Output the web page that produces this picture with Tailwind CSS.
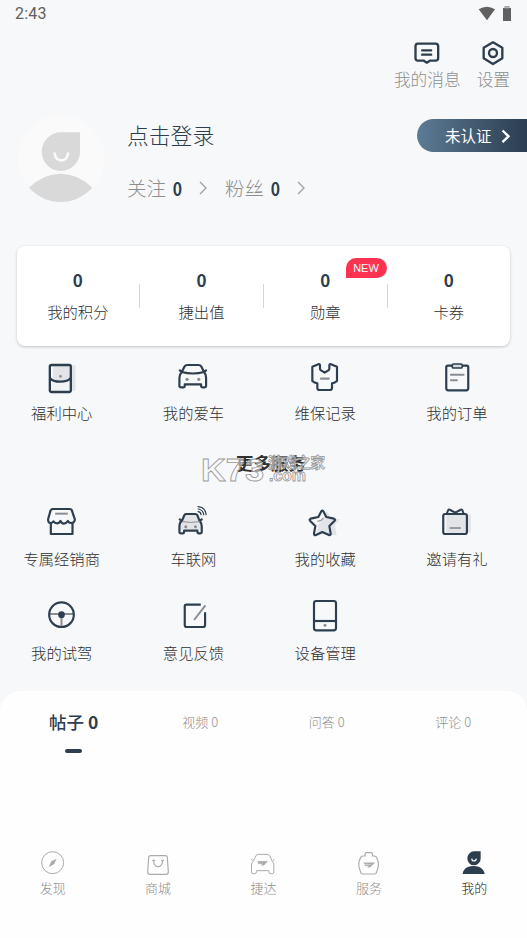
<!DOCTYPE html>
<html lang="zh-CN">
<head>
<meta charset="utf-8">
<meta name="viewport" content="width=device-width, initial-scale=1">
<title>我的</title>
<script src="https://cdn.jsdelivr.net/npm/@tailwindcss/browser@4"></script>
</head>
<body class="bg-[#f7f8fa] overflow-hidden">
<div class="relative flex h-[938px] w-[527px] flex-col overflow-hidden bg-[#f7f8fa] font-['Noto_Sans_CJK_SC',sans-serif] font-light text-[#303030]">

  <!-- status bar -->
  <header class="flex h-7 shrink-0 items-center justify-between pl-[15px] pr-[15px]">
    <span class="font-['Roboto',sans-serif] text-[16px] font-normal leading-7 tracking-[0.2px] text-[#606060]">2:43</span>
    <svg class="h-4 w-9 -translate-y-px" viewBox="288 12 108 48" fill="#606060"><path d="M296 25Q321 10 345 25L321 58Z"/><path d="M374 16h14v5h5v39h-24V21h5z"/><path fill="#b5b5b5" d="M374 16h14v6h-14z"/></svg>
  </header>

  <!-- shortcuts -->
  <div class="flex h-[83px] shrink-0 justify-end gap-4 pr-[17px] pt-[9px] text-[16.7px] leading-[20px] text-[#8e8e8e]">
    <div class="flex flex-col items-center">
      <svg class="size-8" viewBox="94.5 111 96 96" fill="none" stroke="#2d3e4f" stroke-width="7" stroke-linejoin="round" stroke-linecap="round"><path d="M115 131h53q8 0 8 8v35q0 8-8 8h-17l-9 6-9-6h-18q-7 0-7-8v-35q0-8 7-8zM128 151h27M128 164h27"/></svg>
      <span>我的消息</span>
    </div>
    <div class="flex flex-col items-center">
      <svg class="size-8" viewBox="291 111 96 96" fill="none" stroke="#2d3e4f" stroke-width="7" stroke-linejoin="round"><path d="M339 127l28 16v32l-28 17-28-17v-32z"/><circle cx="339" cy="159" r="12"/></svg>
      <span>设置</span>
    </div>
  </div>

  <!-- profile -->
  <section class="flex h-[135px] shrink-0 items-start">
    <svg class="ml-[17px] mt-px h-[92px] w-[90px] shrink-0" viewBox="51 36 270 276"><circle cx="185" cy="175" r="130" fill="#fafafa"/><path d="M183 97h57v58a57.500 58 0 1 1-57-58z" fill="#d9d9d9"/><path d="M87 263Q130 221 182 221T277 263Q235 306 182 306T87 263z" fill="#d9d9d9"/><path d="M164 161q3 20 20 20t20-20" fill="none" stroke="#fafafa" stroke-width="8" stroke-linecap="round"/></svg>
    <div class="ml-5 flex flex-1 flex-col pt-2">
      <h1 class="text-[21.800px] font-light leading-8 text-[#2d3e4f]">点击登录</h1>
      <div class="mt-[21px] flex items-center text-[19.500px] leading-8 text-[#8e8e8e]">
        <span>关注</span><b class="ml-[6px] inline-block scale-x-85 text-[18.500px] font-bold text-[#2d3e4f]">0</b>
        <svg class="ml-[15px] h-4 w-[10px]" viewBox="0 0 10 16" fill="none" stroke="#a3a3a3" stroke-width="1.400"><path d="M2 2l6 6-6 6"/></svg>
        <span class="ml-[17px]">粉丝</span><b class="ml-[6px] inline-block scale-x-85 text-[18.500px] font-bold text-[#2d3e4f]">0</b>
        <svg class="ml-[15px] h-4 w-[10px]" viewBox="0 0 10 16" fill="none" stroke="#a3a3a3" stroke-width="1.400"><path d="M2 2l6 6-6 6"/></svg>
      </div>
    </div>
    <div class="mt-2 flex h-[33px] w-[110px] items-center rounded-l-full bg-linear-to-r from-[#5c7b95] to-[#2c3e50] pl-7 text-[15.500px] font-normal text-white">
      <span>未认证</span>
      <svg class="ml-[8px] h-4 w-3" viewBox="0 0 12 16" fill="none" stroke="#fff" stroke-width="2.400"><path d="M2.500 2.500l6 5.800-6 5.800"/></svg>
    </div>
  </section>

  <!-- balances -->
  <section class="mx-[17px] flex h-[100px] shrink-0 rounded-[8px] bg-white text-center text-[15.300px] shadow-[0_1px_3px_rgba(0,0,0,0.22)]">
    <div class="-ml-[0.500px] flex w-[123.700px] items-center"><div class="flex-1"><b class="block text-[17px] font-bold leading-[30px] text-[#2d3e4f]">0</b><span class="block leading-8">我的积分</span></div><i class="h-6 w-px bg-[#d5d5d5]"></i></div>
    <div class="flex w-[123.700px] items-center"><div class="flex-1"><b class="block text-[17px] font-bold leading-[30px] text-[#2d3e4f]">0</b><span class="block leading-8">捷出值</span></div><i class="h-6 w-px bg-[#d5d5d5]"></i></div>
    <div class="relative flex w-[123.700px] items-center"><div class="flex-1"><b class="block text-[17px] font-bold leading-[30px] text-[#2d3e4f]">0</b><span class="block leading-8">勋章</span></div><i class="h-6 w-px bg-[#d5d5d5]"></i>
      <span class="absolute right-[1px] top-3 h-5 w-[41px] rounded-[10px] rounded-bl-none bg-[#fb3350] font-['Liberation_Sans',sans-serif] text-[11px] font-normal leading-5 text-white">NEW</span>
    </div>
    <div class="flex w-[122.500px] items-center"><div class="flex-1"><b class="block text-[17px] font-bold leading-[30px] text-[#2d3e4f]">0</b><span class="block leading-8">卡券</span></div></div>
  </section>

  <!-- main services -->
  <section class="-ml-[4.200px] grid h-[107px] w-[527px] shrink-0 grid-cols-4 pt-[15px] text-[15.300px] leading-6">
    <div class="flex flex-col items-center gap-[7px]">
      <svg class="size-8 overflow-visible" viewBox="136.500 33 96 96" fill="none" stroke="#2d3e4f" stroke-width="7" stroke-linejoin="round"><path d="M158 46h67v76h-67z" fill="#e2e4e8" stroke="none"/><path d="M148 90q32 16 62 0v34h-62z" fill="#f2f3f5" stroke="none"/><rect x="148" y="45" width="63" height="81" rx="5"/><path d="M148 84q8 11 31 11t32-11"/><circle cx="180" cy="79" r="4" fill="#8b8d92" stroke="none"/></svg>
      <span>福利中心</span>
    </div>
    <div class="flex flex-col items-center gap-[7px]">
      <svg class="size-8 overflow-visible" viewBox="531.750 33 96 96" fill="none" stroke="#2d3e4f" stroke-width="6.500" stroke-linejoin="round" stroke-linecap="round"><path d="M546 66l8-16q3-5 9-5h33q6 0 9 5l8 16M546 66q33 9 67 0M546 66q-7 8-7 17v26q1 3 5 3h8q3 0 3-3v-6h49v6q0 3 4 3h7q4 0 4-4V83q0-10-6-17M540 61l5 4M619 61l-5 4"/><g fill="#8b8d92" stroke="none"><circle cx="562" cy="88" r="5"/><circle cx="597" cy="88" r="5"/></g></svg>
      <span>我的爱车</span>
    </div>
    <div class="flex flex-col items-center gap-[7px]">
      <svg class="size-8 overflow-visible" viewBox="138 33 96 96" fill="none" stroke="#2d3e4f" stroke-width="6.500" stroke-linejoin="round" stroke-linecap="round"><path d="M148 50l20-8q3 0 3 5v9q0 3 3 5l11 7 11-7q3-2 3-5v-9q0-5 3-5l20 8v43q-6 6-15 7v14q0 6-7 6h-30q-7 0-7-6v-14q-9-1-15-7z"/><path d="M174 86h23" stroke="#8b8d92"/></svg>
      <span>维保记录</span>
    </div>
    <div class="flex flex-col items-center gap-[7px]">
      <svg class="size-8 overflow-visible" viewBox="533.250 33 96 96" fill="none" stroke="#2d3e4f" stroke-width="6.500" stroke-linejoin="round" stroke-linecap="round"><path d="M566 47h-12q-5 0-5 5v63q0 6 6 6h54q6 0 6-6V52q0-5-5-5h-12"/><rect x="567" y="42" width="30" height="12" rx="4" fill="#d9dde2" stroke-width="5"/><path d="M563 74h38M563 91h18" stroke="#8b8d92" stroke-width="6"/></svg>
      <span>我的订单</span>
    </div>
  </section>

  <!-- section heading with site stamp over it -->
  <div class="relative flex h-[53px] shrink-0 items-start pl-[236px]">
    <h2 class="-mt-px text-[17.500px] font-bold leading-[22px] text-[#303030]">更多服务</h2>
    <div class="absolute left-[201px] top-[2px] flex" aria-hidden="true">
      <svg class="h-[30px] w-[128px] overflow-visible" viewBox="0 0 128 30" fill="#f7f8fa" fill-opacity=".55" stroke="#999" stroke-width=".8"><text x="0" y="25.500" textLength="63" lengthAdjust="spacingAndGlyphs" font-family="Liberation Sans" font-weight="700" font-size="31">K73</text><text x="67" y="13" font-family="Noto Sans CJK SC" font-weight="700" font-size="14.500" textLength="57">游戏之家</text><text x="68" y="26" font-family="Liberation Sans" font-weight="700" font-size="16" textLength="37">.com</text></svg>
    </div>
  </div>

  <!-- more services -->
  <section class="-ml-[4.200px] grid h-[185px] w-[527px] shrink-0 auto-rows-[93px] grid-cols-4 text-[15.300px] leading-6">
    <div class="flex flex-col items-center gap-[8px]">
      <svg class="size-8 overflow-visible" viewBox="136.500 33 96 96" fill="none" stroke="#2d3e4f" stroke-width="6.500" stroke-linejoin="round"><path d="M151 82v35h65V82M155 42h53q4 0 6 4l9 27q0 11-11 11-7 0-10-6-5 8-12 8-6 0-10-8-5 7-10 7-7 0-11-6-4 5-9 5-8 0-7-12l7-25q2-5 9-5z"/><path d="M164 56h38" stroke="#8b8d92" stroke-width="6"/></svg>
      <span>专属经销商</span>
    </div>
    <div class="flex flex-col items-center gap-[8px]">
      <svg class="size-8 overflow-visible" viewBox="531.750 33 96 96" fill="none" stroke="#2d3e4f" stroke-width="6.500" stroke-linejoin="round" stroke-linecap="round"><path d="M547 76l7-16q2-3 6-3h26q5 0 7 4l6 15 6 8v20h-65V84z" fill="#e2e4e8" stroke="none"/><path d="M546 79l8-19q2-3 6-3h26q5 0 7 4l7 18M544 78q-5 7-5 16v18q0 3 4 3h7q3 0 3-3v-5h40v5q0 3 3 3h6q4 0 4-3V94q0-9-6-16M540 73l4 3M606 73l-4 3"/><path d="M548 80q25 5 51 0" stroke="#8b8d92" stroke-width="3"/><g fill="#8b8d92" stroke="none"><circle cx="558" cy="95" r="4.500"/><circle cx="587" cy="95" r="4.500"/></g><path d="M595 35q22 2 24 24M595 42q15 2 17 17M595 50q8 1 9 9" stroke-width="3.500"/></svg>
      <span>车联网</span>
    </div>
    <div class="flex flex-col items-center gap-[8px]">
      <svg class="size-8 overflow-visible" viewBox="138 33 96 96" fill="none" stroke="#2d3e4f" stroke-width="6.500" stroke-linejoin="round"><path d="M192 48l12 21 27 4-16 18 6 30-61-3 8-34z" fill="#e2e4e8" stroke="none"/><path d="M175 49q3-5 6 0l9 17 23 5q5 2 2 6l-16 16 4 23q0 6-5 4l-20-9-19 9q-6 2-6-4l4-23-16-16q-3-4 2-6l23-5z"/><path d="M163 79q14-2 18-10" stroke="#9a9ca1" stroke-width="4"/></svg>
      <span>我的收藏</span>
    </div>
    <div class="flex flex-col items-center gap-[8px]">
      <svg class="size-8 overflow-visible" viewBox="533.250 33 96 96" fill="none" stroke="#2d3e4f" stroke-width="6.500" stroke-linejoin="round"><path d="M549 59h74v53h-14v6h-60z" fill="#e2e4e8" stroke="none"/><rect x="540" y="57" width="71" height="60" rx="6"/><path d="M551 55l4-10q2-3 6 0l15 8 15-8q4-3 6 0l4 10" stroke-width="6"/><path d="M559 99h34" stroke="#8b8d92" stroke-width="5"/></svg>
      <span>邀请有礼</span>
    </div>
    <div class="flex flex-col items-center gap-[9px]">
      <svg class="size-8 overflow-visible" viewBox="136.500 312 96 96" fill="none" stroke="#2d3e4f" stroke-width="6.500"><path d="M147 357h72M183 360v36" stroke="#8b8d92" stroke-width="6"/><circle cx="183" cy="359" r="37"/><circle cx="183" cy="359" r="10" fill="#2d3e4f" stroke="none"/></svg>
      <span>我的试驾</span>
    </div>
    <div class="flex flex-col items-center gap-[9px]">
      <svg class="size-8 overflow-visible" viewBox="531.750 312 96 96" fill="none" stroke="#2d3e4f" stroke-width="6.500" stroke-linejoin="round"><path d="M603 329h-43q-5 0-5 5v56q0 6 6 6h49q6 0 6-6v-38"/><path d="M617 331l-34 44" stroke="#8b8d92" stroke-width="6"/></svg>
      <span>意见反馈</span>
    </div>
    <div class="flex flex-col items-center gap-[9px]">
      <svg class="size-8 overflow-visible" viewBox="138 312 96 96" fill="none" stroke="#2d3e4f" stroke-width="6.500"><rect x="153" y="318" width="66" height="88" rx="7"/><path d="M153 378h66"/><circle cx="186" cy="391" r="4.500" fill="#8b8d92" stroke="none"/></svg>
      <span>设备管理</span>
    </div>
  </section>

  <!-- posts -->
  <section class="flex flex-1 flex-col rounded-t-[20px] bg-[#fefefe]">
    <div class="ml-[10.500px] flex w-[506px] text-center text-[13px] font-light leading-8 text-[#8e8e8e]">
      <div class="flex flex-1 flex-col items-center pt-[15px] text-[17.500px] font-medium text-[#2d3e4f]"><span>帖子 <b class="font-bold">0</b></span><i class="mt-[11px] h-1 w-[17px] rounded-full bg-[#2d3e4f]"></i></div>
      <div class="flex-1 pt-[15px]">视频 0</div>
      <div class="flex-1 pt-[15px]">问答 0</div>
      <div class="flex-1 pt-[15px]">评论 0</div>
    </div>
  </section>

  <!-- tab bar -->
  <nav class="grid h-[98px] shrink-0 grid-cols-5 bg-[#fefefe] pt-[9px] text-[13px] leading-[22px] text-[#8e8e8e]">
    <div class="flex flex-col items-center">
      <svg class="size-7" viewBox="116 27 84 84" fill="none" stroke="#a9abae" stroke-width="3"><circle cx="157" cy="68" r="33"/><path d="M169 56l-8 17-16 8 8-17z" fill="#a9abae" stroke="none"/></svg><span>发现</span>
    </div>
    <div class="flex flex-col items-center">
      <svg class="size-7" viewBox="432 27 84 84" fill="none" stroke="#a9abae" stroke-width="3.500" stroke-linecap="round"><path d="M452 47h44q6 0 6 6l3 43q0 7-7 7h-48q-7 0-7-7l3-43q0-6 6-6z"/><path d="M461 61q0 19 13 19t14-19M458 61h6M485 61h6"/></svg><span>商城</span>
    </div>
    <div class="flex flex-col items-center">
      <svg class="size-7" viewBox="-40.500 27 84 84" fill="none" stroke="#a9abae" stroke-width="3" stroke-linejoin="round"><path d="M-28 65l8-17q2-5 8-5h26q6 0 8 5l8 17q4 4 4 10v20q0 6-5 6h-5q-5 0-5-6v-3h-37v3q0 6-5 6h-5q-5 0-5-6V75q0-7 5-10zM-34 58l5 3M36 58l-5 3"/><path d="M-14 64H16L4 76h-8l5-5h-14z" stroke-width="1" fill="#a9abae"/></svg><span>捷达</span>
    </div>
    <div class="flex flex-col items-center">
      <svg class="size-7" viewBox="275.700 27 84 84" fill="none" stroke="#a9abae" stroke-width="3.500" stroke-linejoin="round"><path d="M299 48h7v-6q0-4 4-4h14q4 0 4 4v6h6q5 0 7 6l4 10q2 9 0 18l-5 16q-1 4-6 4h-35q-5 0-6-4l-5-16q-2-9 0-18l4-10q2-6 7-6z"/><path d="M301 68h34l-14 14h-8l5-5h-13v-3h17l2-2h-19z" stroke-width="1" fill="#a9abae"/></svg><span>服务</span>
    </div>
    <div class="flex flex-col items-center text-[#222]">
      <svg class="size-7" viewBox="592 27 84 84"><path d="M634 34h20v20a20 21 0 1 1-20-20zM600 102q1-14 15-21 18-6 35 0 14 7 16 21z" fill="#2d3e4f"/><path d="M627 56q1 7 7 7t7-7" stroke="#fff" stroke-width="3.500" fill="none"/></svg><span>我的</span>
    </div>
  </nav>
</div>
</body>
</html>
